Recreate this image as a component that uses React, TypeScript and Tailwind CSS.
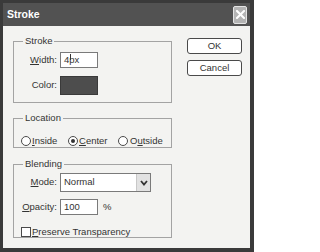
import React from "react";

function Group({ title, className, children }: { title: string; className: string; children: React.ReactNode }) {
  return (
    <div className={`relative border border-[#a3a3a3] ${className}`}>
      <span className="absolute left-[9px] top-[-7px] px-[2px] bg-[#f3f3f1] leading-[12px]">{title}</span>
      {children}
    </div>
  );
}

function Radio({ checked }: { checked?: boolean }) {
  return (
    <span className="w-[10px] h-[10px] rounded-full border border-[#4a4a4a] bg-white flex items-center justify-center shrink-0">
      {checked && <span className="w-[4px] h-[4px] rounded-full bg-[#333]" />}
    </span>
  );
}

export default function App() {
  return (
    <div className="w-[254px] h-[252px] border-t-[3px] border-l-[3px] border-r-4 border-b-4 border-[#3a3a3a] bg-[#f3f3f1] flex flex-col text-[9.5px] text-[#333] font-['Liberation_Sans',Arial,sans-serif]">
      {/* title bar */}
      <div className="h-[23px] bg-[#525252] flex items-center justify-between pl-[4px] pr-[3px]">
        <span className="text-white font-bold text-[10.5px]">Stroke</span>
        <div className="w-[14px] h-[18px] rounded-[2px] border border-[#e4e4e4] bg-[#b4b4b4] flex items-center justify-center">
          <svg width="9" height="9" viewBox="0 0 9 9">
            <path d="M1 1 L8 8 M8 1 L1 8" stroke="#ffffff" strokeWidth="2" strokeLinecap="square" />
          </svg>
        </div>
      </div>

      <div className="flex-1 flex pl-[10px]">
        {/* left column */}
        <div className="w-[159px] flex flex-col pt-[15px]">
          <Group title="Stroke" className="h-[62px] pt-[10px]">
            <div className="flex items-center gap-[3px]">
              <span className="w-[43px] text-right"><u>W</u>idth:</span>
              <div className="relative w-[38px] h-[16px] border border-[#7a7a7a] bg-white flex items-center px-[3px]">
                4px
                <span className="absolute left-[9px] top-[1px] w-[1px] h-[6px] bg-[#333]" />
              </div>
            </div>
            <div className="flex items-center gap-[3px] mt-[8px]">
              <span className="w-[43px] text-right">Color:</span>
              <div className="w-[38px] h-[19px] border border-[#3a3a3a] bg-[#4d4d4d]" />
            </div>
          </Group>

          <Group title="Location" className="h-[30px] mt-[15px] pt-[15px] pl-[7px]">
            <div className="flex items-center">
              <div className="w-[47px] flex items-center gap-[1px]">
                <Radio />
                <span><u>I</u>nside</span>
              </div>
              <div className="w-[50px] flex items-center gap-[1px]">
                <Radio checked />
                <span><u>C</u>enter</span>
              </div>
              <div className="flex items-center gap-[2px]">
                <Radio />
                <span>O<u>u</u>tside</span>
              </div>
            </div>
          </Group>

          <Group title="Blending" className="h-[74px] mt-[16px] pt-[8px]">
            <div className="flex items-center gap-[3px]">
              <span className="w-[43px] text-right"><u>M</u>ode:</span>
              <div className="w-[91px] h-[19px] border border-[#7a7a7a] bg-white flex items-center pl-[3px]">
                <span className="flex-1">Normal</span>
                <div className="w-[14px] h-[17px] bg-[#e2e2e2] border-l border-[#c8c8c8] flex items-center justify-center">
                  <svg width="8" height="6" viewBox="0 0 8 6">
                    <path d="M1 1 L4 4.5 L7 1" stroke="#333" strokeWidth="1.8" fill="none" />
                  </svg>
                </div>
              </div>
            </div>
            <div className="flex items-center gap-[3px] mt-[7px]">
              <span className="w-[43px] text-right"><u>O</u>pacity:</span>
              <div className="w-[38px] h-[16px] border border-[#7a7a7a] bg-white flex items-center px-[3px]">100</div>
              <span className="ml-[2px]">%</span>
            </div>
            <div className="flex items-center gap-[1px] mt-[10px] pl-[7px]">
              <span className="w-[10px] h-[10px] border border-[#4a4a4a] bg-white shrink-0" />
              <span><u>P</u>reserve Transparency</span>
            </div>
          </Group>
        </div>

        {/* right column */}
        <div className="w-[55px] ml-[15px] pt-[12px] flex flex-col gap-[6px]">
          <button className="h-[16px] rounded-[3px] border border-[#4a4a4a] bg-white flex items-center justify-center">OK</button>
          <button className="h-[16px] rounded-[3px] border border-[#4a4a4a] bg-white flex items-center justify-center">Cancel</button>
        </div>
      </div>
    </div>
  );
}
